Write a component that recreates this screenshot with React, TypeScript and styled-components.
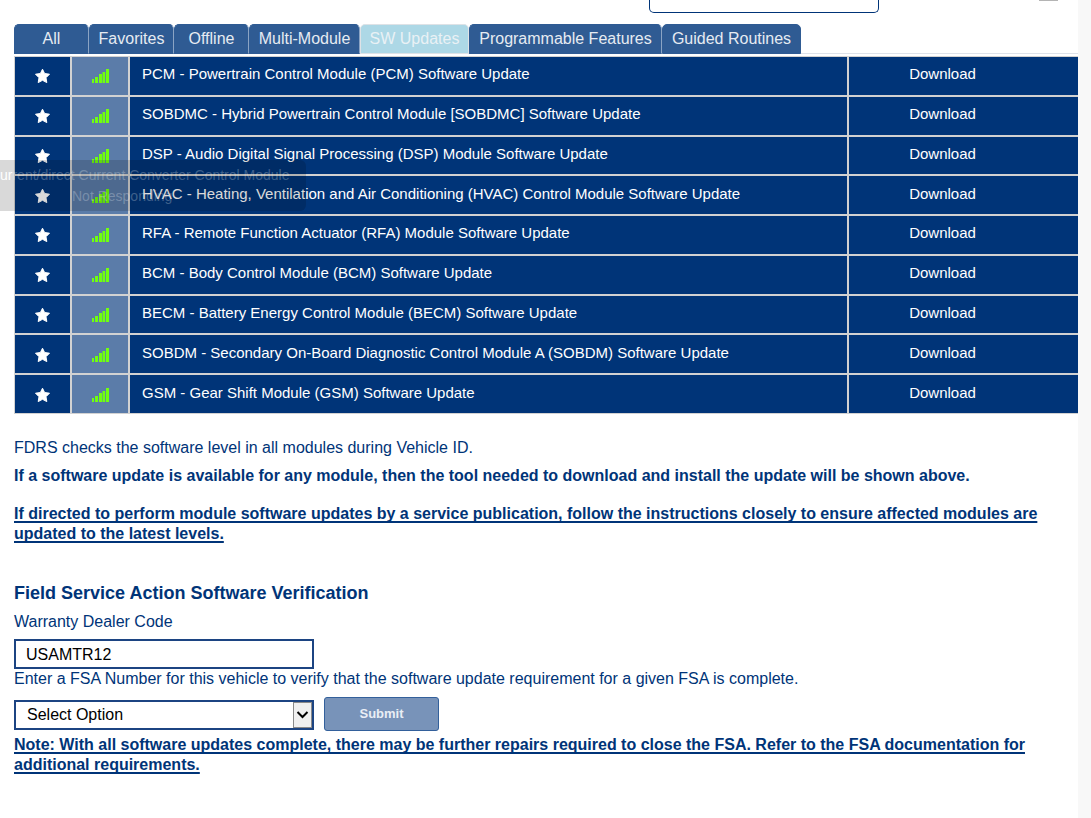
import React from "react";
import styled, { createGlobalStyle } from "styled-components";

const NAVY = "#003478";
const RULE = "#d2d2d2";

const GlobalStyle = createGlobalStyle`
  *, *::before, *::after { box-sizing: border-box; }
  html, body { margin: 0; padding: 0; background: #f8f8f8; }
  body {
    font-family: "Liberation Sans", Arial, sans-serif;
    font-size: 16px;
    line-height: 20px;
    color: ${NAVY};
  }
`;

const Page = styled.main`
  position: relative;
  margin-right: 13px;
  min-height: 100vh;
  padding-left: 14px;
  background: #fff;
  overflow: hidden;
`;

const TopBar = styled.header`
  display: flex;
  justify-content: flex-end;
  align-items: flex-start;
  gap: 160px;
  height: 24px;
  padding-right: 20px;
`;

const SearchBox = styled.input`
  width: 230px;
  height: 13px;
  padding: 0;
  border: 1px solid ${NAVY};
  border-top: 0;
  border-radius: 0 0 5px 5px;
  outline: none;
`;

const Handle = styled.span`
  width: 19px;
  height: 1px;
  background: #b4b4b4;
`;

const Tabs = styled.nav`
  display: flex;
  height: 30px;
  background: linear-gradient(#dee2e9, #dee2e9) 0 29px / 100% 1px no-repeat;
`;

const Tab = styled.button<{ $width: number; $active?: boolean }>`
  width: ${(p) => p.$width}px;
  height: 30px;
  padding: 0 0 1px;
  border: 1px solid ${(p) => (p.$active ? "#dee2e6" : "#2f5b93")};
  border-right-color: ${(p) => (p.$active ? "#dee2e6" : "#8ba4c4")};
  border-radius: 5px 5px 0 0;
  background: ${(p) => (p.$active ? "#add8e6" : "#2f5b93")};
  color: ${(p) => (p.$active ? "#e9f1f5" : "#e6ebf2")};
  font: inherit;
  white-space: nowrap;

  &:last-child {
    border-right-color: #2f5b93;
  }
`;

const ModuleTable = styled.table`
  width: 100%;
  height: 358px;
  margin-top: 2px;
  border-spacing: 0;
  table-layout: fixed;
  background: ${NAVY};
  color: #fff;
  font-size: 15px;
  line-height: 18px;
`;

const Cell = styled.td`
  padding: 0 11px 3px 12px;
  border: 1px solid ${RULE};
`;

const StarCell = styled(Cell)`
  width: 57px;
  padding: 1px 0 0;
  text-align: center;
`;

const SignalCell = styled(StarCell)`
  width: 58px;
  background: #5b7ca9;
`;

const ActionCell = styled(Cell)`
  width: 230px;
  padding-right: 42px;
  padding-left: 0;
  border-right: 0;
  text-align: center;
`;

const IconButton = styled.button`
  display: block;
  width: 16px;
  height: 16px;
  margin: 0 auto;
  padding: 0;
  border: 0;
  background: none;
`;

const Icon = styled.svg`
  display: block;
  margin: 0 auto;
`;

const DownloadButton = styled.button`
  padding: 0;
  border: 0;
  background: none;
  color: inherit;
  font: inherit;
`;

const Toast = styled.div`
  position: absolute;
  top: 160px;
  left: 0;
  width: 306px;
  height: 51px;
  padding-top: 5px;
  border-radius: 0 6px 6px 0;
  background: rgba(0, 0, 0, 0.15);
  color: rgba(255, 255, 255, 0.25);
  font-size: 14px;
  line-height: 21px;
  white-space: nowrap;
`;

const ToastLead = styled.span`
  color: #fff;
`;

const ToastStatus = styled.div`
  padding-left: 72px;
`;

const Info = styled.section`
  padding: 24px 20px 0 0;
`;

const Text = styled.p`
  margin: 0;
`;

const Strong = styled.p<{ $top?: number }>`
  margin: ${(p) => p.$top ?? 0}px 0 0;
  font-weight: 700;
`;

const Underlined = styled(Strong)`
  text-decoration: underline;
  text-decoration-thickness: 2px;
  text-underline-offset: 2px;
  text-decoration-skip-ink: none;
`;

const Form = styled.form`
  padding: 38px 20px 0 0;
`;

const Heading = styled.h2`
  margin: 0 0 8px;
  font-size: 18px;
  line-height: 22px;
`;

const Label = styled.label`
  display: block;
`;

const CodeInput = styled.input`
  display: block;
  width: 300px;
  height: 30px;
  margin-top: 7px;
  padding: 2px 10px 0;
  border: 2px solid #1c4482;
  background: #fff;
  color: #000;
  font: inherit;
`;

const Row = styled.div`
  display: flex;
  align-items: flex-end;
  gap: 10px;
  margin-top: 8px;
`;

const SelectWrap = styled.div`
  position: relative;
  width: 300px;
  height: 30px;
  margin-bottom: 1px;
`;

const Select = styled.select`
  display: block;
  width: 100%;
  height: 30px;
  padding: 0 11px;
  border: 2px solid #1c4482;
  border-radius: 0;
  background: #fff;
  color: #000;
  font: inherit;
  appearance: none;
`;

const Arrow = styled.span`
  position: absolute;
  top: 2px;
  right: 2px;
  display: flex;
  align-items: center;
  width: 19px;
  height: 26px;
  border: 1px solid #8a8a8a;
  background: #f0f0f0;
  pointer-events: none;
`;

const Submit = styled.button`
  width: 115px;
  height: 34px;
  padding: 0 0 1px;
  border: 1px solid #33609b;
  border-radius: 3px;
  background: #7893b9;
  color: #e9eef5;
  font: inherit;
  font-size: 13px;
  font-weight: 700;
`;

const tabs = [
  { label: "All", width: 75 },
  { label: "Favorites", width: 85 },
  { label: "Offline", width: 75 },
  { label: "Multi-Module", width: 111 },
  { label: "SW Updates", width: 109, active: true },
  { label: "Programmable Features", width: 193 },
  { label: "Guided Routines", width: 139 },
];

const modules = [
  "PCM - Powertrain Control Module (PCM) Software Update",
  "SOBDMC - Hybrid Powertrain Control Module [SOBDMC] Software Update",
  "DSP - Audio Digital Signal Processing (DSP) Module Software Update",
  "HVAC - Heating, Ventilation and Air Conditioning (HVAC) Control Module Software Update",
  "RFA - Remote Function Actuator (RFA) Module Software Update",
  "BCM - Body Control Module (BCM) Software Update",
  "BECM - Battery Energy Control Module (BECM) Software Update",
  "SOBDM - Secondary On-Board Diagnostic Control Module A (SOBDM) Software Update",
  "GSM - Gear Shift Module (GSM) Software Update",
];

const Star = () => (
  <Icon width="16" height="16" viewBox="0 0 16 16" aria-hidden="true">
    <path
      d="M7.500 1.200l2.100 4.300 4.900.7-3.500 3.500.8 4.900-4.300-2.300-4.300 2.300.8-4.900L.5 6.200l4.900-.7z"
      fill="#fff"
      stroke="#fff"
      strokeWidth="1"
      strokeLinejoin="round"
    />
  </Icon>
);

const Signal = () => (
  <Icon width="17" height="14" viewBox="0 0 17 14" aria-hidden="true">
    <path
      d="M0 10h2v4H0zM3 8h3v6H3zM7 5h3v9H7zM10.500 3h2.700v11h-2.700zM14 0h3v14h-3z"
      fill="#70ff10"
    />
  </Icon>
);

export default function App() {
  return (
    <>
      <GlobalStyle />
      <Page>
        <TopBar>
          <SearchBox aria-label="Search" />
          <Handle />
        </TopBar>
        <Tabs>
          {tabs.map((t) => (
            <Tab key={t.label} type="button" $width={t.width} $active={t.active}>
              {t.label}
            </Tab>
          ))}
        </Tabs>
        <ModuleTable>
          <tbody>
            {modules.map((name) => (
              <tr key={name}>
                <StarCell>
                  <IconButton type="button" aria-label="Favorite">
                    <Star />
                  </IconButton>
                </StarCell>
                <SignalCell>
                  <Signal />
                </SignalCell>
                <Cell>{name}</Cell>
                <ActionCell>
                  <DownloadButton type="button">Download</DownloadButton>
                </ActionCell>
              </tr>
            ))}
          </tbody>
        </ModuleTable>
        <Info>
          <Text>FDRS checks the software level in all modules during Vehicle ID.</Text>
          <Strong $top={8}>
            If a software update is available for any module, then the tool needed to download and
            install the update will be shown above.
          </Strong>
          <Underlined $top={18}>
            If directed to perform module software updates by a service publication, follow the
            instructions closely to ensure affected modules are updated to the latest levels.
          </Underlined>
        </Info>
        <Form onSubmit={(e) => e.preventDefault()}>
          <Heading>Field Service Action Software Verification</Heading>
          <Label htmlFor="dealer">Warranty Dealer Code</Label>
          <CodeInput id="dealer" defaultValue="USAMTR12" />
          <Label htmlFor="fsa">
            Enter a FSA Number for this vehicle to verify that the software update requirement for a
            given FSA is complete.
          </Label>
          <Row>
            <SelectWrap>
              <Select id="fsa">
                <option>Select Option</option>
              </Select>
              <Arrow>
                <svg width="17" height="24" viewBox="0 0 17 24" aria-hidden="true">
                  <path d="M3.500 9l5 5 5-5" fill="none" stroke="#000" strokeWidth="2" />
                </svg>
              </Arrow>
            </SelectWrap>
            <Submit type="submit">Submit</Submit>
          </Row>
          <Underlined $top={4}>
            Note: With all software updates complete, there may be further repairs required to close
            the FSA. Refer to the FSA documentation for additional requirements.
          </Underlined>
        </Form>
        <Toast>
          <ToastLead>ur</ToastLead>rent/direct Current Converter Control Module
          <ToastStatus>Not Responding</ToastStatus>
        </Toast>
      </Page>
    </>
  );
}
